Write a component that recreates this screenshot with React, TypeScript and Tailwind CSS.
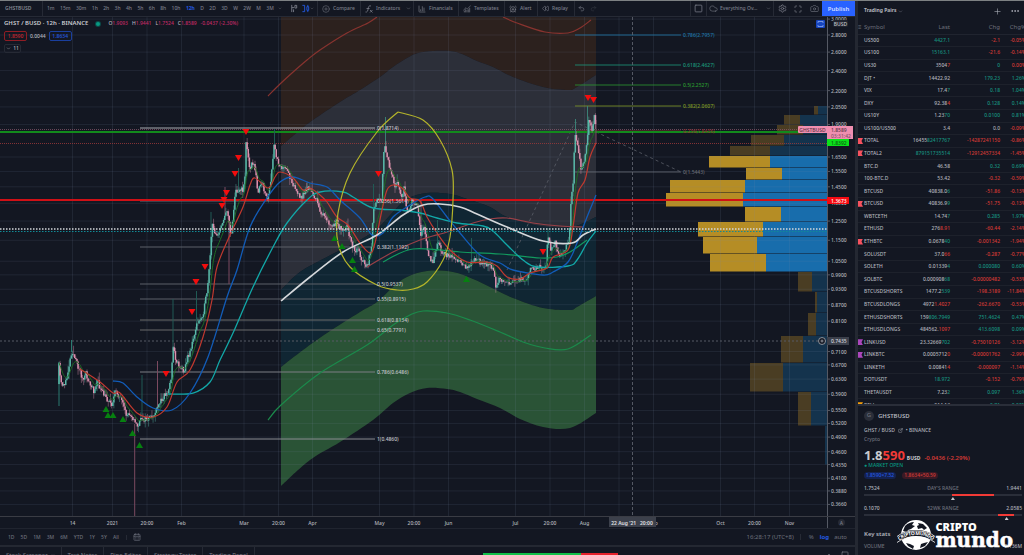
import type { ReactNode } from 'react';
import {
  AlarmClockPlus,
  CalendarDays,
  Camera,
  ChartColumn,
  ChartNoAxesCombined,
  ChevronDown,
  ChevronUp,
  CirclePlus,
  Cloud,
  Ellipsis,
  ExternalLink,
  Maximize,
  Plus,
  Redo2,
  Rewind,
  Settings,
  Square,
  Undo2,
} from 'lucide-react';

type Point = [number, number];

const PLOT_RIGHT = 827;
const PLOT_BOTTOM = 517;

// Log price scale
const priceY = (price: number) => 35 + 230.7 * Math.log(2.8 / price);

// Catmull-Rom spline through the points
function curve(points: Point[], start = 'M') {
  let d = `${start}${points[0][0]} ${points[0][1]}`;
  for (let i = 0; i < points.length - 1; i++) {
    const p0 = points[i - 1] ?? points[i];
    const p1 = points[i];
    const p2 = points[i + 1];
    const p3 = points[i + 2] ?? p2;
    d += `C${p1[0] + (p2[0] - p0[0]) / 6} ${p1[1] + (p2[1] - p0[1]) / 6} ${p2[0] - (p3[0] - p1[0]) / 6} ${p2[1] - (p3[1] - p1[1]) / 6} ${p2[0]} ${p2[1]}`;
  }
  return d;
}

const band = (top: Point[], bottom: Point[]) =>
  `${curve(top)}${curve([...bottom].reverse(), 'L')}Z`;

const bandEdges: Point[][] = [
  [[281, 17], [596, 17]],
  [[281, 146], [300, 130], [313, 120], [340, 102], [360, 90], [380, 77], [393, 67], [407, 58], [418, 53], [433, 51], [450, 51], [462, 54], [477, 61], [493, 67], [513, 77], [543, 87], [568, 90], [577, 87], [596, 75]],
  [[281, 290], [300, 272], [327, 257], [360, 240], [378, 228], [393, 212], [407, 199], [427, 193], [450, 194], [467, 199], [490, 207], [507, 217], [540, 226], [572, 227], [596, 217]],
  [[281, 367], [303, 350], [327, 333], [360, 312], [377, 302], [393, 287], [407, 277], [427, 271], [453, 272], [473, 279], [490, 287], [513, 298], [543, 308], [570, 310], [577, 307], [596, 296]],
  [[281, 486], [310, 460], [340, 442], [373, 420], [393, 403], [410, 393], [427, 388], [447, 389], [460, 392], [477, 399], [500, 408], [520, 419], [543, 427], [570, 428], [596, 413]],
];
const bandFills = ['#2c211e', '#2c2f39', '#102633', '#2a5336'];

const lines: { color: string; width: number; points: Point[] }[] = [
  { color: '#88332f', width: 1.2, points: [[268, 96], [280, 84], [292, 73], [307, 60], [320, 50], [347, 33], [368, 23], [377, 17]] },
  { color: '#88332f', width: 1.2, points: [[503, 17], [517, 23], [545, 32], [568, 33], [580, 28], [591, 20]] },
  { color: '#1b8a4b', width: 1.2, points: [[268, 420], [281, 405], [320, 373], [367, 345], [393, 325], [410, 315], [423, 311], [447, 313], [470, 320], [500, 332], [523, 342], [545, 348], [568, 349], [591, 335]] },
  { color: '#9a4148', width: 1.2, points: [[367, 267], [393, 252], [420, 240], [447, 232], [473, 223], [490, 219], [507, 218], [533, 223], [560, 226], [583, 227]] },
  { color: '#129a5f', width: 1.2, points: [[383, 262], [413, 249], [460, 252], [500, 254], [540, 258], [557, 257], [570, 252], [587, 240]] },
  { color: '#12a8a8', width: 1.3, points: [[168, 394], [193, 393], [210, 382], [220, 360], [233, 333], [253, 287], [273, 247], [287, 223], [307, 200], [320, 192], [343, 192], [353, 197], [373, 208], [400, 210], [420, 213], [437, 218], [457, 223], [483, 226], [493, 231], [507, 245], [523, 260], [537, 267], [568, 266], [577, 260], [587, 243], [596, 231]] },
  { color: '#125cb8', width: 1.3, points: [[113, 381], [123, 383], [137, 397], [153, 408], [172, 410], [190, 393], [208, 357], [227, 297], [237, 270], [250, 227], [267, 198], [280, 182], [293, 177], [310, 183], [327, 187], [340, 200], [360, 218], [372, 235], [383, 233], [393, 217], [410, 205], [425, 197], [432, 198], [447, 217], [460, 233], [480, 255], [500, 263], [513, 270], [543, 275], [553, 272], [568, 262], [577, 243], [587, 217], [596, 195]] },
  { color: '#c0392f', width: 1.2, points: [[80, 369], [100, 382], [113, 393], [120, 393], [137, 413], [153, 417], [167, 407], [177, 382], [190, 370], [203, 337], [212, 300], [217, 267], [230, 235], [243, 207], [250, 185], [255, 178], [268, 188], [275, 177], [280, 172], [293, 178], [303, 190], [310, 188], [320, 195], [327, 202], [337, 217], [348, 225], [360, 243], [370, 253], [375, 243], [382, 210], [387, 190], [393, 185], [402, 188], [410, 198], [420, 201], [427, 217], [437, 233], [450, 250], [467, 262], [487, 262], [497, 266], [507, 277], [520, 279], [530, 273], [547, 268], [553, 257], [568, 250], [573, 227], [578, 193], [585, 180], [590, 157], [596, 143]] },
  { color: '#d5d8db', width: 1.6, points: [[281, 301], [310, 277], [343, 252], [377, 235], [403, 215], [423, 205], [440, 204], [460, 207], [477, 214], [507, 227], [543, 241], [572, 243], [583, 235], [596, 229]] },
];

const ellipse: Point[] = [[398, 112], [423, 120], [440, 140], [452, 170], [453, 200], [450, 237], [443, 260], [427, 282], [413, 289], [397, 290], [377, 285], [350, 267], [338, 243], [338, 213], [350, 173], [377, 132], [398, 112]];

const closes: Point[] = [
  [59, 366], [61, 384], [66, 383], [69, 365], [72, 350], [76, 362], [80, 370], [83, 381], [86, 374], [90, 385], [94, 391], [97, 380], [101, 391], [106, 398], [112, 404], [116, 390], [121, 400], [126, 415], [131, 413], [135, 423], [138, 426], [142, 418], [146, 420], [151, 418], [156, 412], [160, 402], [164, 395], [168, 393], [171, 378], [173, 347], [176, 360], [180, 367], [184, 370], [188, 357], [192, 345], [196, 327], [201, 318], [204, 310], [208, 285], [210, 260], [212, 225], [215, 232], [219, 235], [222, 222], [226, 212], [229, 218], [231, 238], [234, 205], [236, 190], [240, 190], [243, 190], [245, 175], [246, 143], [248, 155], [250, 168], [253, 162], [256, 176], [258, 192], [262, 183], [264, 189], [267, 200], [271, 182], [274, 145], [277, 160], [281, 166], [287, 171], [293, 183], [300, 199], [308, 187], [315, 197], [320, 210], [327, 222], [332, 227], [337, 222], [342, 233], [347, 228], [352, 243], [355, 253], [357, 247], [362, 260], [367, 267], [372, 247], [373, 210], [377, 197], [382, 200], [383, 160], [385, 147], [388, 160], [392, 177], [395, 187], [397, 180], [402, 197], [404, 187], [407, 215], [412, 201], [417, 203], [419, 217], [421, 235], [424, 227], [427, 247], [431, 262], [434, 260], [438, 240], [442, 253], [450, 255], [460, 263], [467, 268], [472, 260], [483, 262], [493, 267], [496, 288], [499, 277], [505, 283], [517, 282], [527, 277], [531, 265], [535, 270], [540, 267], [546, 268], [548, 237], [551, 250], [555, 243], [559, 257], [565, 248], [569, 243], [571, 200], [573, 183], [575, 133], [578, 147], [581, 167], [584, 163], [587, 143], [589, 120], [592, 132], [594, 115], [596, 130],
];

function buildCandles() {
  let seed = 11;
  const random = () => {
    seed = (seed * 16807) % 2147483647;
    return seed / 2147483647;
  };
  const candles: { x: number; open: number; close: number; high: number; low: number }[] = [];
  let open = 384;
  let k = 0;
  for (let x = 59; x <= 596; x += 1.12) {
    while (k < closes.length - 2 && closes[k + 1][0] < x) k++;
    const [x0, y0] = closes[k];
    const [x1, y1] = closes[k + 1];
    const close = y0 + ((y1 - y0) * (x - x0)) / (x1 - x0) + (random() - 0.5) * 6;
    const high = Math.min(open, close) - random() * random() * 9;
    const low = Math.max(open, close) + random() * random() * 8;
    candles.push({ x, open, close, high, low });
    open = close;
  }
  return candles;
}

const candles = buildCandles();

let average = candles[0].close;
const fastAverage = candles.map((c): Point => {
  average += (c.close - average) * 0.2;
  return [c.x, average];
});

// x, top, bottom
const longWicks: { color: string; at: [number, number, number] }[] = [
  { color: '#2a7a70', at: [59, 362, 406] },
  { color: '#2a7a70', at: [71.5, 340, 352] },
  { color: '#7c4a60', at: [134.7, 424, 517] },
  { color: '#205a54', at: [142, 375, 418] },
  { color: '#7c4a60', at: [157.5, 361, 410] },
  { color: '#205a54', at: [173, 299, 350] },
  { color: '#205a54', at: [196.5, 291, 330] },
  { color: '#205a54', at: [211, 212, 260] },
  { color: '#7c4a60', at: [225, 187, 215] },
  { color: '#7c4a60', at: [229, 215, 284] },
  { color: '#205a54', at: [238.5, 168, 190] },
  { color: '#205a54', at: [274.5, 129, 150] },
  { color: '#205a54', at: [373.5, 184, 230] },
  { color: '#3b7f74', at: [385.5, 117, 150] },
  { color: '#7c4a60', at: [421, 200, 248] },
  { color: '#205a54', at: [437.5, 220, 245] },
  { color: '#205a54', at: [471.5, 238, 262] },
  { color: '#205a54', at: [548, 228, 245] },
  { color: '#3b7f74', at: [575.5, 119, 140] },
  { color: '#3b7f74', at: [587.5, 106, 140] },
  { color: '#7c4a60', at: [596, 120, 143] },
];

const sells: Point[] = [[166, 374], [192, 312], [196, 282], [205, 267], [222, 206], [224, 200], [226.5, 193], [235, 174], [238.5, 158], [246, 132], [378.5, 174], [543, 252], [588, 98], [593.5, 100]];
const buys: Point[] = [[106, 409], [108, 415], [113, 415], [123, 419], [132.5, 433], [139.5, 445], [334.5, 238], [342, 246], [352.5, 260], [354.5, 269], [466.5, 279]];

// left, split, top, bottom, inside the value area
const profile: [number, number, number, number, boolean][] = [
  [814, 818, 106, 115, false],
  [784, 800, 115, 125, false],
  [777, 803, 125, 135, false],
  [751, 784, 135, 146, false],
  [730, 770, 146, 156, false],
  [709, 770, 156, 168, true],
  [746, 782, 168, 180, true],
  [670, 745, 180, 193, true],
  [666, 743, 193, 207, true],
  [745, 781, 207, 222, true],
  [698, 763, 222, 237, true],
  [703, 757, 237, 254, true],
  [710, 766, 254, 272, true],
  [798, 812, 272, 292, false],
  [815, 817, 292, 313, false],
  [808, 816, 313, 336, false],
  [781, 803, 336, 363, false],
  [750, 783, 363, 392, false],
  [798, 811, 392, 426, false],
  [825, 825, 426, 465, false],
];

const leftFib = [
  { y: 128, label: '0(1.8714)', color: '#a9abb0' },
  { y: 201, label: '0.236(1.3614)', color: '#6d6f76' },
  { y: 247, label: '0.382(1.1192)', color: '#5d6068' },
  { y: 284, label: '0.5(0.9537)', color: '#5d6068' },
  { y: 299, label: '0.55(0.8915)', color: '#5d6068' },
  { y: 320, label: '0.618(0.8134)', color: '#6a6a6a' },
  { y: 330, label: '0.65(0.7791)', color: '#6a6a6a' },
  { y: 372, label: '0.786(0.6486)', color: '#7d7f84' },
  { y: 439, label: '1(0.4860)', color: '#8c8e93' },
];

const rightFib = [
  { y: 35, label: '0.786(2.7957)', color: '#1f76a8' },
  { y: 65, label: '0.618(2.4627)', color: '#1b9a7c' },
  { y: 85, label: '0.5(2.2527)', color: '#2b9a30' },
  { y: 106, label: '0.382(2.0607)', color: '#7f9a25' },
  { y: 131, label: '0.236(1.8436)', color: '#8f3030' },
  { y: 172, label: '0(1.5443)', color: '#686b74' },
];

const prices = [3, 2.8, 2.6, 2.4, 2.2, 2.05, 1.9, 1.65, 1.55, 1.45, 1.35, 1.25, 1.15, 1.05, 0.99, 0.93, 0.87, 0.81, 0.71, 0.67, 0.63, 0.59, 0.55, 0.52, 0.49, 0.46, 0.435, 0.41, 0.388, 0.366];

const times: [number, string][] = [
  [72.5, '14'], [112.5, '2021'], [147, '20:00'], [181.5, 'Feb'], [244, 'Mar'], [278.5, '20:00'], [312.5, 'Apr'], [379.5, 'May'], [414, '20:00'], [448.5, 'Jun'], [515.5, 'Jul'], [550, '20:00'], [584.5, 'Aug'], [619, ''], [653.5, 'Sep'], [720.5, 'Oct'], [754.5, '20:00'], [789.5, 'Nov'],
];

function PriceChart() {
  return (
    <svg viewBox="0 17 855 511" className="block w-full text-[5px] font-medium" role="img" aria-label="GHST / BUSD price chart">
      {bandFills.map((fill, i) => (
        <path key={fill} d={band(bandEdges[i], bandEdges[i + 1])} fill={fill} />
      ))}

      {/* Volume profile */}
      {profile.map(([left, split, top, bottom, inside]) => (
        <g key={top}>
          <rect x={left} y={top} width={split - left} height={bottom - top - 0.5} fill={inside ? '#b58d25' : '#4a3d23'} />
          <rect x={split} y={top} width={PLOT_RIGHT - split} height={bottom - top - 0.5} fill={inside ? '#186dac' : '#14334d'} />
        </g>
      ))}

      {/* Grid */}
      <g stroke="#7f89a8" strokeOpacity={0.13}>
        {prices.map((price) => (
          <line key={price} x1={0} x2={PLOT_RIGHT} y1={priceY(price)} y2={priceY(price)} />
        ))}
        {times.map(([x]) => (
          <line key={x} x1={x} x2={x} y1={17} y2={PLOT_BOTTOM} />
        ))}
      </g>

      {/* Levels */}
      {leftFib.map(({ y, color }) => (
        <line key={y} x1={140} x2={375} y1={y} y2={y} stroke={color} />
      ))}
      {rightFib.map(({ y, color }) => (
        <line key={y} x1={575} x2={681} y1={y} y2={y} stroke={color} strokeOpacity={0.8} />
      ))}
      <path d="M507 270L575 122L681 172" fill="none" stroke="#5b5e68" strokeWidth={0.8} strokeDasharray="3 3" />
      <line x1={0} x2={PLOT_RIGHT} y1={129.5} y2={129.5} stroke="#8f5a70" strokeWidth={0.7} strokeDasharray="1 1" />
      <line x1={0} x2={PLOT_RIGHT} y1={132} y2={132} stroke="#128a1c" strokeWidth={1.8} />
      <line x1={0} x2={PLOT_RIGHT} y1={143.5} y2={143.5} stroke="#a03a3a" strokeWidth={0.8} strokeDasharray="1 1" />
      <line x1={0} x2={PLOT_RIGHT} y1={200} y2={200} stroke="#d01016" strokeWidth={1.8} />
      <line x1={0} x2={PLOT_RIGHT} y1={341} y2={341} stroke="#565a64" strokeDasharray="2 2" />
      <line x1={632.5} x2={632.5} y1={17} y2={PLOT_BOTTOM} stroke="#666a74" strokeWidth={0.8} strokeDasharray="3 2" />

      {/* Candles */}
      {longWicks.map(({ color, at: [x, top, bottom] }) => (
        <line key={x} x1={x} x2={x} y1={top} y2={bottom} stroke={color} />
      ))}
      {candles.map(({ x, open, close, high, low }) => {
        const color = close < open ? '#58b8a8' : '#dd90ae';
        return (
          <g key={x}>
            <line x1={x} x2={x} y1={high} y2={low} stroke={color} strokeWidth={0.6} strokeOpacity={0.7} />
            <line x1={x} x2={x} y1={open} y2={close} stroke={color} strokeWidth={1.5} />
          </g>
        );
      })}
      <path d={curve(fastAverage)} fill="none" stroke="#1c6b22" />
      {lines.map(({ color, width, points }, i) => (
        <path key={i} d={curve(points)} fill="none" stroke={color} strokeWidth={width} />
      ))}
      <path d={curve(ellipse)} fill="none" stroke="#b4b42a" strokeWidth={1.2} />
      <line x1={0} x2={PLOT_RIGHT} y1={229} y2={229} stroke="#d5d8db" strokeWidth={1.4} strokeDasharray="1.5 1.5" />
      <line x1={0} x2={PLOT_RIGHT} y1={231.5} y2={231.5} stroke="#118a96" strokeDasharray="1.5 1.5" />

      {sells.map(([x, y]) => (
        <path key={`${x}-${y}`} d={`M${x - 3.5} ${y - 3}h7l-3.5 6z`} fill="#f20d0d" />
      ))}
      {buys.map(([x, y]) => (
        <path key={`${x}-${y}`} d={`M${x - 3.5} ${y + 3}h7l-3.5 -6z`} fill="#078010" />
      ))}

      {leftFib.map(({ y, label }) => (
        <text key={y} x={377} y={y + 2} fill="#c3c5ca">{label}</text>
      ))}
      {rightFib.map(({ y, label, color }) => (
        <text key={y} x={683} y={y + 2} fill={color}>{label}</text>
      ))}

      {/* Price axis */}
      <line x1={827.5} x2={827.5} y1={17} y2={528} stroke="#555964" />
      {prices.map((price) => (
        <g key={price}>
          <line x1={828} x2={830} y1={priceY(price)} y2={priceY(price)} stroke="#555964" />
          <text x={831} y={priceY(price) + 2} fill="#b2b5bd">{price.toFixed(4)}</text>
        </g>
      ))}
      <rect x={833} y={20} width={15} height={7} rx={1.5} fill="#20242f" />
      <text x={840.5} y={25.5} textAnchor="middle" fill="#c3c5ca">BUSD</text>
      <rect x={816} y={20} width={9} height={8} rx={1} fill="#1746c0" />
      <path d="M818 23v-1.5h5v1.5M818 25v1.5h5v-1.5" fill="none" stroke="#8fa8e8" strokeWidth={0.8} />
      <rect x={798} y={126} width={30} height={7} rx={1} fill="#ef8fb0" />
      <text x={812.5} y={131.5} textAnchor="middle" fill="#5a3345">GHSTBUSD</text>
      <rect x={827} y={126} width={26} height={13} fill="#ef8fb0" />
      <text x={831} y={131.5} fill="#5a3345">1.8589</text>
      <text x={831} y={137.5} fill="#8a506a">03:31:42</text>
      <rect x={827} y={139} width={22} height={7} fill="#0be01a" />
      <text x={831} y={144.5} fill="#0b5a12">1.8392</text>
      <rect x={827} y={197} width={22} height={7} fill="#f50a12" />
      <text x={831} y={202.5} fill="#ffffff">1.3673</text>
      <rect x={827} y={337} width={22} height={8} fill="#3c404b" />
      <text x={831} y={343} fill="#d1d4dc">0.7435</text>
      <circle cx={822} cy={341} r={3.5} fill="#131722" stroke="#a6a9b1" strokeWidth={0.8} />
      <path d="M820.5 341h3M822 339.5v3" stroke="#a6a9b1" strokeWidth={0.8} />

      {/* Time axis */}
      <line x1={0} x2={855} y1={516.5} y2={516.5} stroke="#3a3c44" />
      {times.map(([x, label]) => (
        <text key={x} x={x} y={524.5} textAnchor="middle" fill="#b2b5bd">{label}</text>
      ))}
      <rect x={609} y={517} width={47} height={10} fill="#3c404b" />
      <text x={632} y={524.5} textAnchor="middle" fill="#e0e2e7" className="font-semibold">22 Aug '21&#160;&#160; 20:00</text>
      <circle cx={841.5} cy={522.5} r={3.5} fill="#262a35" />
      <text x={841.5} y={524.5} textAnchor="middle" fill="#7b7e88">A</text>
    </svg>
  );
}

const intervals = ['1m', '15m', '30m', '1h', '2h', '3h', '4h', '5h', '6h', '8h', '10h', '12h', 'D', '2D', '3D', 'W', '2W', 'M', '3M'];

function ToolButton({ icon, label, className = '' }: { icon: ReactNode; label: string; className?: string }) {
  return (
    <button type="button" className={`flex h-full shrink-0 items-center gap-[3px] border-r border-[#262a35] ${className}`}>
      {icon}
      {label}
    </button>
  );
}

function Toolbar() {
  return (
    <header className="flex h-4 items-center overflow-hidden border-b border-[#262a35] text-[5px] leading-none font-medium text-[#7b7e89]">
      <button type="button" className="h-full w-[43px] shrink-0 border-r border-[#262a35] pl-[5px] text-left font-semibold text-[#868993]">
        GHSTBUSD
      </button>
      <div className="flex h-full w-[275px] shrink-0 items-center border-r border-[#262a35] pr-[3px] pl-1">
        <div className="flex w-[227px] shrink-0 items-center justify-between">
          {intervals.map((interval) => (
            <button key={interval} type="button" className={interval === '12h' ? 'font-bold text-[#2459e0]' : ''}>
              {interval}
            </button>
          ))}
        </div>
        <ChevronDown size={5} className="mr-2 ml-1" />
        <button type="button" aria-label="Chart type" className="mr-1">
          <svg viewBox="0 0 8 10" className="h-[9px] w-2" fill="none" stroke="currentColor">
            <path d="M1.5 1v8M4 4h-2.5M3.5 9V6M5 1.5h2v3h-2z" />
          </svg>
        </button>
        <button type="button" aria-label="Candles" className="text-[#2459e0]">
          <svg viewBox="0 0 8 10" className="h-[9px] w-2" fill="none" stroke="currentColor">
            <path d="M0 1.5h2.5v7h-2.5M5 3h2v4h-2zM6 1v2M6 7v2" />
          </svg>
        </button>
        <ChevronDown size={5} className="ml-auto" />
      </div>
      <ToolButton className="w-[43px] pl-1" icon={<CirclePlus size={8} strokeWidth={1.5} />} label="Compare" />
      <button type="button" className="flex h-full w-[53px] shrink-0 items-center gap-[3px] border-r border-[#262a35] pl-1">
        <svg viewBox="0 0 8 8" className="h-2 w-2" fill="none" stroke="currentColor" strokeWidth={0.8}>
          <path d="M6 1C4 .3 3.5 1.5 3.2 3.5S2.5 7.5.5 7M1.5 3.5h3M5 5l2.5 2.5M7.5 5L5 7.5" />
        </svg>
        Indicators
        <ChevronDown size={5} className="ml-auto mr-[2px]" />
      </button>
      <ToolButton className="w-[45px] pl-1" icon={<ChartColumn size={8} strokeWidth={2} />} label="Financials" />
      <ToolButton className="w-[46px] pl-1" icon={<ChartNoAxesCombined size={8} strokeWidth={2} />} label="Templates" />
      <ToolButton className="w-[33px] pl-1" icon={<AlarmClockPlus size={8} strokeWidth={2} />} label="Alert" />
      <ToolButton className="w-[37px] pl-1" icon={<Rewind size={7} strokeWidth={2} />} label="Replay" />
      <button type="button" aria-label="Undo" className="ml-[3px]"><Undo2 size={7} /></button>
      <button type="button" aria-label="Redo" className="ml-[5px] text-[#333742]"><Redo2 size={7} /></button>

      <div className="ml-auto flex h-full shrink-0 items-center">
        <button type="button" aria-label="Layout" className="flex h-full w-[17px] items-center justify-center border-x border-[#262a35]"><Square size={9} strokeWidth={2} /></button>
        <button type="button" className="flex h-full w-[67px] items-center gap-[2px] border-r border-[#262a35] pl-[2px]">
          <Cloud size={9} strokeWidth={1.5} />
          Everything Ov...
          <ChevronDown size={5} className="ml-auto mr-[2px]" />
        </button>
        <button type="button" aria-label="Settings" className="flex w-4 justify-center"><Settings size={9} strokeWidth={2} /></button>
        <button type="button" aria-label="Full screen" className="flex w-4 justify-center"><Maximize size={8} strokeWidth={2} /></button>
        <button type="button" aria-label="Snapshot" className="flex w-4 justify-center"><Camera size={9} strokeWidth={1.5} /></button>
        <button type="button" className="h-full w-[33px] bg-[#2962ff] text-[6px] font-semibold text-[#d5dfff]">Publish</button>
      </div>
    </header>
  );
}

function Legend() {
  return (
    <div className="absolute top-[2px] left-1 flex flex-col gap-[3px] text-[5px] leading-none font-medium text-[#b2b5be]">
      <div className="flex items-center">
        <h1 className="text-[6px] leading-[9px] font-semibold text-[#c8cad0]">GHST / BUSD · 12h · BINANCE</h1>
        <span className="mx-2 size-1 rounded-full bg-[#089981] ring-1 ring-[#0b4a48]" />
        <p className="flex gap-[4px] text-[#c02a64]">
          <span><span className="text-[#b2b5be]">O</span>1.9093</span>
          <span><span className="text-[#b2b5be]">H</span>1.9441</span>
          <span><span className="text-[#b2b5be]">L</span>1.7524</span>
          <span><span className="text-[#b2b5be]">C</span>1.8589</span>
          <span>-0.0437 (-2.30%)</span>
        </p>
      </div>
      <div className="flex items-center gap-[3px]">
        <button type="button" className="h-[10px] w-[23px] rounded-xs border border-[#8f1d24] text-[#c9252d]">1.8590</button>
        <span>0.0044</span>
        <button type="button" className="h-[10px] w-[23px] rounded-xs border border-[#1a3f9e] text-[#2459e0]">1.8634</button>
      </div>
      <button type="button" className="flex h-[9px] w-[17px] items-center justify-center gap-[2px] rounded-xs border border-[#262a35]">
        <ChevronDown size={5} /> 11
      </button>
    </div>
  );
}

function ChartFooter() {
  return (
    <>
      <div className="flex h-[17px] items-center border-t border-[#20242f] px-2 text-[6px] leading-none text-[#6d707b]">
        <div className="flex w-[119px] items-center justify-between border-r border-[#262a35] pr-[7px] text-[5px] font-medium">
          {['1D', '5D', '1M', '3M', '6M', 'YTD', '1Y', '5Y', 'All'].map((range) => (
            <button key={range} type="button">{range}</button>
          ))}
        </div>
        <button type="button" aria-label="Go to date" className="ml-[6px]"><CalendarDays size={8} /></button>
        <span className="ml-auto border-r border-[#262a35] pr-[6px]">16:28:17 (UTC+8)</span>
        <button type="button" className="ml-2">%</button>
        <button type="button" className="ml-[6px] font-bold text-[#2459e0]">log</button>
        <button type="button" className="ml-[5px]">auto</button>
      </div>
      <nav className="relative flex h-[10px] shrink-0 overflow-hidden border-t-2 border-[#242832] text-[6px] leading-none text-[#7b7e89]">
        {['Stock Screener', 'Text Notes', 'Pine Editor', 'Strategy Tester', 'Trading Panel'].map((tab, i) => (
          <button key={tab} type="button" className="flex h-[15px] shrink-0 items-center gap-[3px] border-r border-[#262a35] px-[6px]">
            {tab}
            {i === 0 && <ChevronDown size={4} />}
          </button>
        ))}
        <div className="absolute top-[6px] left-[57%] ml-[-4px] flex h-1 w-[135px]">
          <span className="w-[98px] bg-[#13c04a]" />
          <span className="flex-1 bg-[#e5222c]" />
        </div>
        <div className="ml-auto flex h-4 items-center gap-2 pr-[6px]">
          <ChevronUp size={8} />
          <Square size={8} />
        </div>
      </nav>
    </>
  );
}

type Tone = 'up' | 'down' | 'flat';
const tones: Record<Tone, string> = { up: 'text-[#17917f]', down: 'text-[#d33a35]', flat: 'text-[#a6a9b1]' };

interface Quote {
  symbol: string;
  last: string;
  tick?: string;
  tickTone?: Tone;
  chg: string;
  pct: string;
  flag?: string;
}

const RED = 'bg-[#f7525f]';
const PURPLE = 'bg-[#ab47bc]';

const quotes: Quote[] = [
  { symbol: 'US500', last: '', tick: '4427.1', tickTone: 'up', chg: '-2.1', pct: '-0.05%' },
  { symbol: 'US100', last: '', tick: '15163.1', tickTone: 'up', chg: '-21.6', pct: '-0.14%' },
  { symbol: 'US30', last: '3504', tick: '7', tickTone: 'down', chg: '0', pct: '0.00%' },
  { symbol: 'DJT •', last: '14422.92', chg: '179.23', pct: '1.26%' },
  { symbol: 'VIX', last: '17.4', tick: '7', tickTone: 'up', chg: '0.18', pct: '1.04%' },
  { symbol: 'DXY', last: '92.38', tick: '4', tickTone: 'down', chg: '0.128', pct: '0.14%' },
  { symbol: 'US10Y', last: '1.23', tick: '70', tickTone: 'up', chg: '0.0100', pct: '0.81%' },
  { symbol: 'US100/US500', last: '3.4', chg: '0.0', pct: '-0.09%' },
  { symbol: 'TOTAL', last: '16455', tick: '82417767', tickTone: 'up', chg: '-14287241150', pct: '-0.86%', flag: RED },
  { symbol: 'TOTAL2', last: '', tick: '879151735514', tickTone: 'up', chg: '-12912457334', pct: '-1.45%', flag: RED },
  { symbol: 'BTC.D', last: '46.58', chg: '0.32', pct: '0.69%' },
  { symbol: '100-BTC.D', last: '53.42', chg: '-0.32', pct: '-0.59%' },
  { symbol: 'BTCUSD', last: '40838.0', tick: '6', tickTone: 'up', chg: '-51.86', pct: '-0.13%' },
  { symbol: 'BTCUSD', last: '40836.9', tick: '9', tickTone: 'up', chg: '-51.75', pct: '-0.13%', flag: RED },
  { symbol: 'WBTCETH', last: '14.74', tick: '7', tickTone: 'up', chg: '0.285', pct: '1.97%' },
  { symbol: 'ETHUSD', last: '276', tick: '8.91', tickTone: 'down', chg: '-60.44', pct: '-2.14%' },
  { symbol: 'ETHBTC', last: '0.0678', tick: '40', tickTone: 'up', chg: '-0.001342', pct: '-1.94%', flag: RED },
  { symbol: 'SOLUSDT', last: '37.0', tick: '66', tickTone: 'down', chg: '-0.287', pct: '-0.77%' },
  { symbol: 'SOLETH', last: '0.01339', tick: '4', tickTone: 'up', chg: '0.000080', pct: '0.60%' },
  { symbol: 'SOLBTC', last: '0.000908', tick: '68', tickTone: 'up', chg: '-0.00000482', pct: '-0.53%' },
  { symbol: 'BTCUSDSHORTS', last: '1477.2', tick: '539', tickTone: 'up', chg: '-198.3189', pct: '-11.84%' },
  { symbol: 'BTCUSDLONGS', last: '4972', tick: '1.4027', tickTone: 'down', chg: '-262.6670', pct: '-0.53%' },
  { symbol: 'ETHUSDSHORTS', last: '159', tick: '806.7949', tickTone: 'up', chg: '751.4624', pct: '0.47%' },
  { symbol: 'ETHUSDLONGS', last: '484562.', tick: '1097', tickTone: 'down', chg: '413.6098', pct: '0.09%' },
  { symbol: 'LINKUSD', last: '23.32669', tick: '702', tickTone: 'up', chg: '-0.75010126', pct: '-3.12%', flag: PURPLE },
  { symbol: 'LINKBTC', last: '0.0005712', tick: '0', tickTone: 'down', chg: '-0.00001762', pct: '-2.99%', flag: PURPLE },
  { symbol: 'LINKETH', last: '0.00841', tick: '4', tickTone: 'down', chg: '-0.000097', pct: '-1.14%' },
  { symbol: 'DOTUSDT', last: '', tick: '18.972', tickTone: 'up', chg: '-0.152', pct: '-0.79%' },
  { symbol: 'THETAUSDT', last: '7.23', tick: '2', tickTone: 'up', chg: '0.097', pct: '1.36%' },
  { symbol: 'BELL', last: '914.13', chg: '0.71', pct: '0.08%', flag: 'bg-[#f59e0b]' },
];

function toneOf(value: string): Tone {
  if (value === '0.0') return 'flat';
  return value.startsWith('-') || value === '0.00%' ? 'down' : 'up';
}

function Watchlist() {
  return (
    <section className="h-[403px] shrink-0 overflow-hidden">
      <div className="flex h-5 items-center pr-1 pl-[6px] text-[#b2b5be]">
        <h2 className="text-[5px] font-bold">Trading Pairs</h2>
        <ChevronDown size={5} className="ml-[2px] text-[#868993]" />
        <button type="button" aria-label="Add symbol" className="ml-auto"><Plus size={9} strokeWidth={1.5} /></button>
        <button type="button" aria-label="More" className="ml-2"><Ellipsis size={10} strokeWidth={2} /></button>
      </div>
      <table className="h-[391px] w-[168px] table-fixed text-right text-[5px] leading-none font-medium text-[#b2b5bd]">
        <thead>
          <tr className="h-[13px] border-b border-[#20242f] text-[6px] text-[#6d707b]">
            <th className="w-[6px] p-0 text-left font-normal">≡</th>
            <th className="w-[40px] p-0 text-left font-normal">Symbol</th>
            <th className="w-[46px] p-0 font-normal">Last</th>
            <th className="w-[50px] p-0 font-normal">Chg</th>
            <th className="p-0 font-normal">Chg%</th>
          </tr>
        </thead>
        <tbody>
          {quotes.map((quote, i) => (
            <tr key={i} className="border-b border-[#1d212b]">
              <td className="p-0">
                <span className={`block h-[6px] w-[5px] [clip-path:polygon(0_0,100%_0,70%_50%,100%_100%,0_100%)] ${quote.flag ?? ''}`} />
              </td>
              <td className="p-0 text-left">{quote.symbol}</td>
              <td className="p-0">
                {quote.last}
                {quote.tick && <span className={tones[quote.tickTone ?? 'flat']}>{quote.tick}</span>}
              </td>
              <td className={`p-0 ${tones[toneOf(quote.chg)]}`}>{quote.chg}</td>
              <td className={`p-0 ${tones[toneOf(quote.pct)]}`}>{quote.pct}</td>
            </tr>
          ))}
        </tbody>
      </table>
    </section>
  );
}

interface RangeProps {
  label: string;
  low: string;
  high: string;
  fill: string;
  marker: string;
}

function Range({ label, low, high, fill, marker }: RangeProps) {
  return (
    <div className="h-5 text-[5px] leading-[6px]">
      <div className="flex justify-between">
        <span>{low}</span>
        <span className="text-[#6d707b]">{label}</span>
        <span>{high}</span>
      </div>
      <div className="relative mt-[3px] h-[2px] bg-[#2a2e39]">
        <span className={`absolute top-0 h-full bg-[#f23a36] ${fill}`} />
        <span className={`absolute top-[3px] h-[3px] w-1 bg-[#c8cad0] [clip-path:polygon(50%_0,100%_100%,0_100%)] ${marker}`} />
      </div>
    </div>
  );
}

function Details() {
  return (
    <section className="flex flex-col pr-[2px] pl-[6px] font-medium text-[#b2b5bd]">
      <div className="mt-1 flex h-[11px] items-center gap-1">
        <span className="flex size-[10px] items-center justify-center rounded-full bg-[#2a2e39] text-[6px] text-[#6d707b]">G</span>
        <h2 className="text-[6px] leading-none font-semibold">GHSTBUSD</h2>
      </div>
      <p className="mt-[5px] flex h-2 items-center gap-[3px] text-[5px] leading-none">
        GHST / BUSD <ExternalLink size={5} /> • BINANCE
      </p>
      <p className="mt-px text-[5px] leading-2 text-[#6d707b]">Crypto</p>
      <p className="mt-[6px] flex items-baseline text-[13px] leading-[13px] font-bold text-[#c8cad0]">
        1.8<span className="text-[#f23a36]">590</span>
        <span className="ml-[2px] text-[5px] leading-none">BUSD</span>
        <span className="ml-1 text-[6px] leading-none font-semibold text-[#d33a35]">-0.0436 (-2.29%)</span>
      </p>
      <p className="text-[5px] leading-[6px] text-[#089981]">● MARKET OPEN</p>
      <div className="mt-[4px] flex gap-[6px] text-[5px] leading-[7px]">
        <span className="w-8 rounded-full bg-[#142250] text-center text-[#2459e0]">1.8590×7.52</span>
        <span className="w-9 rounded-full bg-[#3a1a25] text-center text-[#d33a35]">1.8634×50.59</span>
      </div>
      <div className="mt-[6px]">
        <Range label="DAY'S RANGE" low="1.7524" high="1.9441" fill="left-[56%] w-[26%]" marker="left-[55%]" />
        <Range label="52WK RANGE" low="0.1070" high="2.0585" fill="left-[85%] w-[10%]" marker="left-[89%]" />
      </div>
      <h3 className="mt-[5px] text-[6px] leading-2 font-semibold">Key stats</h3>
      <p className="mt-1 flex justify-between text-[5px] leading-2">
        <span className="text-[#6d707b]">VOLUME</span>
        <span>2.136M</span>
      </p>
    </section>
  );
}

function Logo() {
  return (
    <div className="absolute right-[11px] bottom-1 flex items-center text-white">
      <svg viewBox="0 0 38 32" className="h-8 w-[38px]">
        <circle cx={19} cy={16} r={15} fill="#fff" />
        <path d="M8 7c3-3 6-4 9-4l-2 3 3 1-4 3-3 1-1 2-4-1zM21 4l5 1 4 4-3 2-2-2-4 1-1-3 2-1zM27 24l4-1-3 4-5 2 1-4zM9 24l4 1 4 2-1 3-5-3z" fill="#131722" />
        <path id="logo-band" d="M1 20C8 15 12 14 19 14s12 1 18 6" fill="none" stroke="#131722" strokeWidth={6} />
        <path d="M0 17.5C8 10 30 10 38 17.5M0 23.5C9 16 29 16 38 23.5" fill="none" stroke="#fff" strokeWidth={0.8} />
        <text className="text-[5px] font-bold" fill="#fff" textAnchor="middle">
          <textPath href="#logo-band" startOffset="50%" dominantBaseline="central">CRIPTOMUNDO</textPath>
        </text>
      </svg>
      <div className="flex flex-col">
        <span className="text-[11px] leading-[11px] font-black">CRIPTO</span>
        <span className="font-['DejaVu_Serif',serif] text-[20px] leading-[17px] font-bold [-webkit-text-stroke:0.5px_white]">mundo</span>
      </div>
    </div>
  );
}

export default function App() {
  return (
    <div className="relative flex h-screen overflow-hidden border-t border-[#7d8183] bg-[#131722] font-['Noto_Sans',sans-serif]">
      <main className="flex min-w-0 flex-1 flex-col">
        <Toolbar />
        <div className="relative">
          <PriceChart />
          <Legend />
        </div>
        <ChartFooter />
      </main>
      <aside className="flex w-[169px] shrink-0 flex-col overflow-hidden border-l-3 border-[#242832]">
        <Watchlist />
        <div className="h-[2px] shrink-0 bg-[#2a2e39]" />
        <Details />
      </aside>
      <Logo />
    </div>
  );
}
